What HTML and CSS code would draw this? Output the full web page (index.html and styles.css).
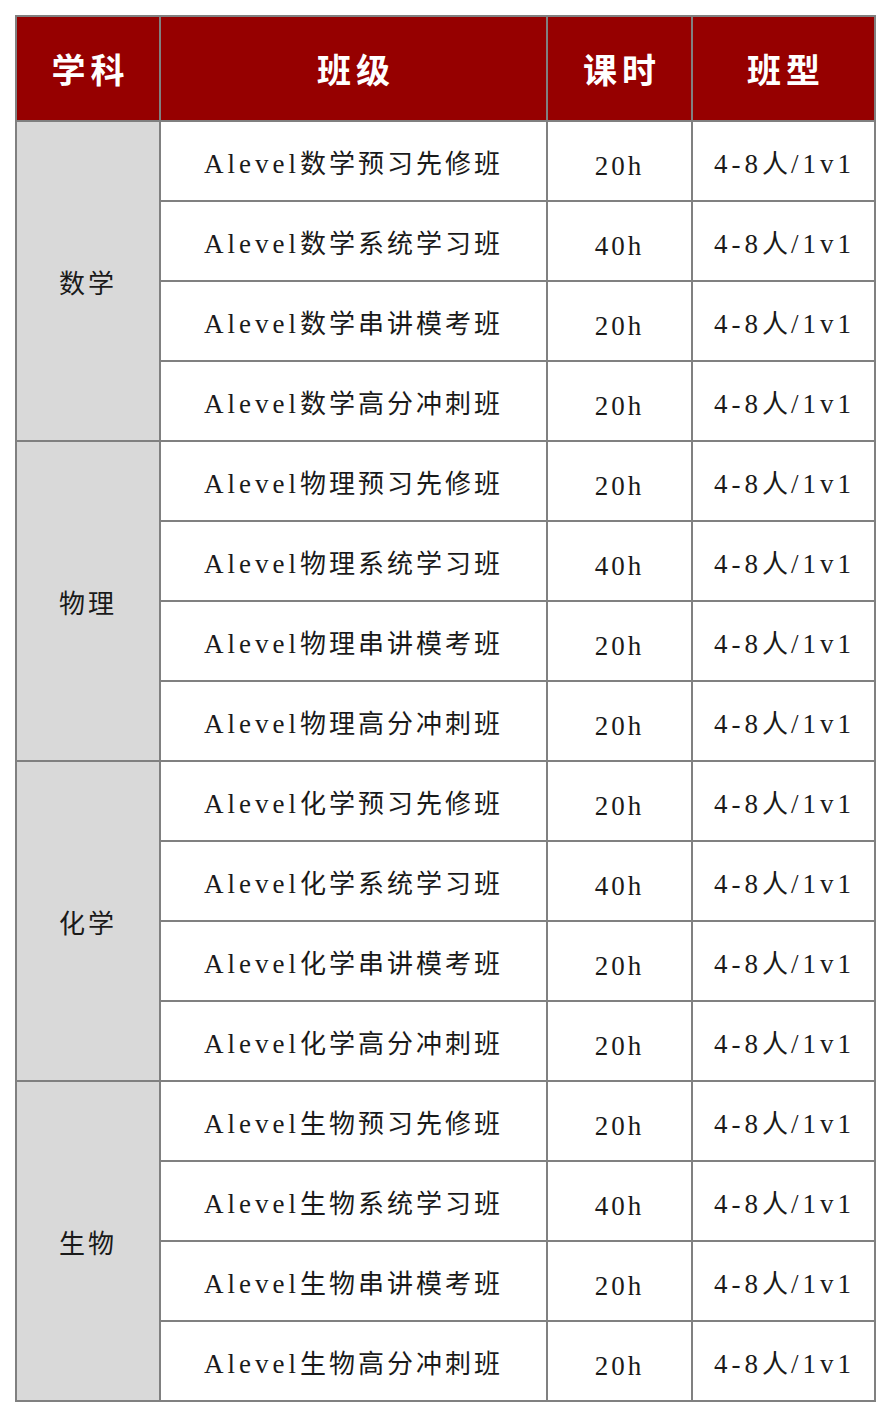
FILE: index.html
```html
<!DOCTYPE html>
<html lang="zh">
<head>
<meta charset="utf-8">
<link rel="stylesheet" href="styles.css">
</head>
<body>
<table class="course">
  <colgroup>
    <col class="c1"><col class="c2"><col class="c3"><col class="c4">
  </colgroup>
  <thead>
    <tr><th>学科</th><th>班级</th><th>课时</th><th>班型</th></tr>
  </thead>
  <tbody>
    <tr><td class="subj" rowspan="4"><span class="zh">数学</span></td><td><span class="en">Alevel</span><span class="zh">数学预习先修班</span></td><td class="hrs">20h</td><td class="size">4-8<span class="zh">人</span>/1v1</td></tr>
    <tr><td><span class="en">Alevel</span><span class="zh">数学系统学习班</span></td><td class="hrs">40h</td><td class="size">4-8<span class="zh">人</span>/1v1</td></tr>
    <tr><td><span class="en">Alevel</span><span class="zh">数学串讲模考班</span></td><td class="hrs">20h</td><td class="size">4-8<span class="zh">人</span>/1v1</td></tr>
    <tr><td><span class="en">Alevel</span><span class="zh">数学高分冲刺班</span></td><td class="hrs">20h</td><td class="size">4-8<span class="zh">人</span>/1v1</td></tr>

    <tr><td class="subj" rowspan="4"><span class="zh">物理</span></td><td><span class="en">Alevel</span><span class="zh">物理预习先修班</span></td><td class="hrs">20h</td><td class="size">4-8<span class="zh">人</span>/1v1</td></tr>
    <tr><td><span class="en">Alevel</span><span class="zh">物理系统学习班</span></td><td class="hrs">40h</td><td class="size">4-8<span class="zh">人</span>/1v1</td></tr>
    <tr><td><span class="en">Alevel</span><span class="zh">物理串讲模考班</span></td><td class="hrs">20h</td><td class="size">4-8<span class="zh">人</span>/1v1</td></tr>
    <tr><td><span class="en">Alevel</span><span class="zh">物理高分冲刺班</span></td><td class="hrs">20h</td><td class="size">4-8<span class="zh">人</span>/1v1</td></tr>

    <tr><td class="subj" rowspan="4"><span class="zh">化学</span></td><td><span class="en">Alevel</span><span class="zh">化学预习先修班</span></td><td class="hrs">20h</td><td class="size">4-8<span class="zh">人</span>/1v1</td></tr>
    <tr><td><span class="en">Alevel</span><span class="zh">化学系统学习班</span></td><td class="hrs">40h</td><td class="size">4-8<span class="zh">人</span>/1v1</td></tr>
    <tr><td><span class="en">Alevel</span><span class="zh">化学串讲模考班</span></td><td class="hrs">20h</td><td class="size">4-8<span class="zh">人</span>/1v1</td></tr>
    <tr><td><span class="en">Alevel</span><span class="zh">化学高分冲刺班</span></td><td class="hrs">20h</td><td class="size">4-8<span class="zh">人</span>/1v1</td></tr>

    <tr><td class="subj" rowspan="4"><span class="zh">生物</span></td><td><span class="en">Alevel</span><span class="zh">生物预习先修班</span></td><td class="hrs">20h</td><td class="size">4-8<span class="zh">人</span>/1v1</td></tr>
    <tr><td><span class="en">Alevel</span><span class="zh">生物系统学习班</span></td><td class="hrs">40h</td><td class="size">4-8<span class="zh">人</span>/1v1</td></tr>
    <tr><td><span class="en">Alevel</span><span class="zh">生物串讲模考班</span></td><td class="hrs">20h</td><td class="size">4-8<span class="zh">人</span>/1v1</td></tr>
    <tr><td><span class="en">Alevel</span><span class="zh">生物高分冲刺班</span></td><td class="hrs">20h</td><td class="size">4-8<span class="zh">人</span>/1v1</td></tr>
  </tbody>
</table>
</body>
</html>
```

FILE: styles.css
```css
html, body {
  margin: 0;
  padding: 0;
  background: #ffffff;
}

body {
  padding: 15px 0 0 15px;
}

.course {
  border-collapse: collapse;
  table-layout: fixed;
  width: 859px;
  font-family: "Liberation Serif", "Noto Sans CJK SC", serif;
  color: #1a1a1a;
}

.c1 { width: 144px; }
.c2 { width: 387px; }
.c3 { width: 145px; }
.c4 { width: 183px; }

.course th,
.course td {
  border: 2px solid #808080;
  padding: 0;
  text-align: center;
  vertical-align: middle;
}

.course thead tr {
  height: 105px;
}

.course th {
  background: #960000;
  color: #ffffff;
  font-family: "Noto Sans CJK SC", sans-serif;
  font-weight: 700;
  font-size: 34px;
  letter-spacing: 5px;
  text-indent: 5px;
}

.course tbody tr {
  height: 80px;
}

.course td {
  font-size: 27px;
  letter-spacing: 3px;
  background: #ffffff;
}

.course td.hrs {
  padding-top: 10px;
}

.course td.size {
  letter-spacing: 4px;
  text-indent: 2px;
}

.course td.subj {
  background: #d9d9d9;
}

.zh {
  font-family: "Noto Sans CJK SC", sans-serif;
  font-size: 26px;
  font-weight: 400;
  letter-spacing: 3px;
}

.en {
  font-family: "Liberation Serif", serif;
  letter-spacing: 4px;
}
```
